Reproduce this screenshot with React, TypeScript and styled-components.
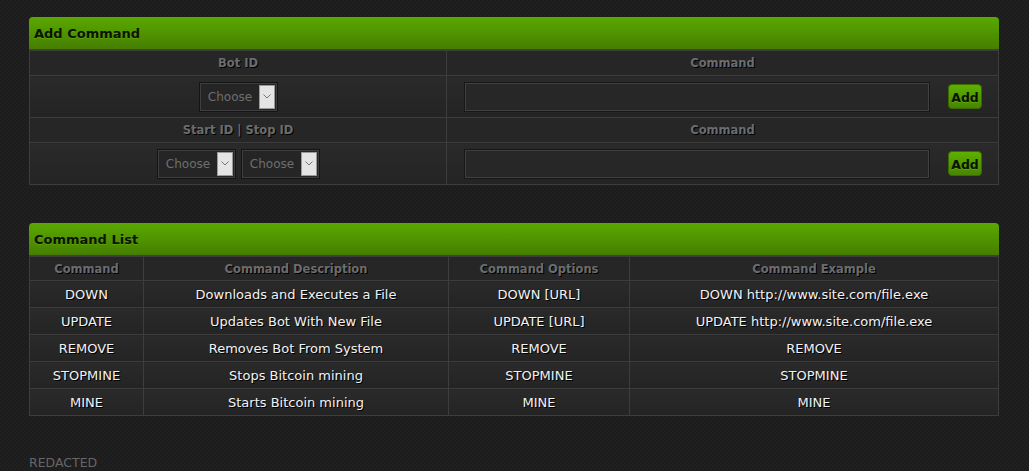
import React from "react";
import styled, { createGlobalStyle } from "styled-components";

const Global = createGlobalStyle`
  html, body {
    margin: 0;
    padding: 0;
    background-color: #1c1c1c;
    background-image:
      linear-gradient(45deg, rgba(255,255,255,0.018) 25%, transparent 25%, transparent 75%, rgba(255,255,255,0.018) 75%),
      linear-gradient(45deg, rgba(255,255,255,0.018) 25%, transparent 25%, transparent 75%, rgba(255,255,255,0.018) 75%);
    background-size: 4px 4px;
    background-position: 0 0, 2px 2px;
    font-family: "DejaVu Sans", Verdana, sans-serif;
    color: #fff;
  }
`;

const Page = styled.div`
  padding: 17px 31px 0 29px;
  width: 970px;
  display: flex;
  flex-direction: column;
`;

const Panel = styled.section<{ $gap?: number }>`
  width: 970px;
  display: flex;
  flex-direction: column;
  margin-bottom: ${(p) => p.$gap ?? 0}px;
`;

const PanelHeader = styled.div`
  height: 33px;
  box-sizing: border-box;
  border-radius: 4px 4px 0 0;
  background: linear-gradient(to bottom, #5aa800 0%, #4f9200 55%, #457e00 100%);
  border-bottom: 1px solid #2f5500;
  display: flex;
  align-items: center;
  padding: 1px 0 0 5px;
  font-size: 13px;
  font-weight: bold;
  color: #0c1400;
  text-shadow: 0 1px 0 rgba(120, 200, 40, 0.35);
`;

const Table = styled.table`
  width: 100%;
  border-collapse: collapse;
  border: 1px solid #3d3d3d;
  table-layout: fixed;
`;

const HeadCell = styled.th<{ $w?: number; $h?: number }>`
  ${(p) => (p.$w ? `width: ${p.$w}px;` : "")}
  height: ${(p) => p.$h ?? 24}px;
  padding: 0;
  background: #262626;
  border: 1px solid #3d3d3d;
  color: #6c6c6c;
  font-size: 11.5px;
  font-weight: bold;
  text-align: center;
  text-shadow: 1px 1px 0 #000;
`;

const Cell = styled.td<{ $h: number }>`
  height: ${(p) => p.$h}px;
  padding: 0;
  background: linear-gradient(to bottom, #2a2a2a, #242424);
  border: 1px solid #3d3d3d;
  text-align: center;
  color: #f2f2f2;
  font-size: 13px;
  text-shadow: 1px 1px 0 #000;
`;

const SelectRow = styled.div`
  display: flex;
  justify-content: center;
  gap: 7px;
`;

const SelectBox = styled.div`
  width: 77px;
  height: 28px;
  box-sizing: border-box;
  border: 1px solid #3e3e3e;
  outline: 1px solid #141414;
  background: #252525;
  display: flex;
  align-items: center;
  padding: 1px;
`;

const SelectLabel = styled.span`
  flex: 1;
  text-align: center;
  color: #6e6e6e;
  font-size: 12px;
  text-shadow: none;
`;

const Arrow = styled.span`
  width: 16px;
  height: 24px;
  background: #e4e4e4;
  border: 1px solid #9a9a9a;
  box-sizing: border-box;
  display: flex;
  align-items: center;
  justify-content: center;
`;

const InputRow = styled.div`
  display: flex;
  align-items: center;
  padding: 0 16px 0 18px;
  gap: 19px;
`;

const TextInput = styled.input`
  flex: 1;
  height: 28px;
  box-sizing: border-box;
  background: #272727;
  border: 1px solid #404040;
  outline: 1px solid #171717;
  color: #ddd;
  font-family: inherit;
  font-size: 12px;
`;

const AddButton = styled.button`
  width: 34px;
  height: 25px;
  padding: 1px 0 0;
  border: 1px solid #3c6a00;
  border-radius: 4px;
  background: linear-gradient(to bottom, #5eb000, #478500);
  color: #0a1200;
  font-family: inherit;
  font-size: 12.5px;
  font-weight: bold;
  text-shadow: 0 1px 0 rgba(130, 210, 40, 0.35);
  cursor: pointer;
`;

const Footer = styled.div`
  margin-top: 39px;
  color: #666;
  font-size: 12.5px;
`;

const Chevron = () => (
  <svg width="8" height="5" viewBox="0 0 8 5">
    <path d="M0.5 0.5 L4 4 L7.5 0.5" fill="none" stroke="#777" strokeWidth="1" />
  </svg>
);

const Select = () => (
  <SelectBox>
    <SelectLabel>Choose</SelectLabel>
    <Arrow>
      <Chevron />
    </Arrow>
  </SelectBox>
);

const commands = [
  ["DOWN", "Downloads and Executes a File", "DOWN [URL]", "DOWN http://www.site.com/file.exe"],
  ["UPDATE", "Updates Bot With New File", "UPDATE [URL]", "UPDATE http://www.site.com/file.exe"],
  ["REMOVE", "Removes Bot From System", "REMOVE", "REMOVE"],
  ["STOPMINE", "Stops Bitcoin mining", "STOPMINE", "STOPMINE"],
  ["MINE", "Starts Bitcoin mining", "MINE", "MINE"],
];

const CommandRow = ({ selects }: { selects: number }) => (
  <tr>
    <Cell $h={41}>
      <SelectRow>
        {Array.from({ length: selects }, (_, i) => (
          <Select key={i} />
        ))}
      </SelectRow>
    </Cell>
    <Cell $h={41}>
      <InputRow>
        <TextInput />
        <AddButton>Add</AddButton>
      </InputRow>
    </Cell>
  </tr>
);

export default function App() {
  return (
    <>
      <Global />
      <Page>
        <Panel $gap={38}>
          <PanelHeader>Add Command</PanelHeader>
          <Table>
            <tbody>
              <tr>
                <HeadCell $w={416}>Bot ID</HeadCell>
                <HeadCell>Command</HeadCell>
              </tr>
              <CommandRow selects={1} />
              <tr>
                <HeadCell>Start ID | Stop ID</HeadCell>
                <HeadCell>Command</HeadCell>
              </tr>
              <CommandRow selects={2} />
            </tbody>
          </Table>
        </Panel>

        <Panel>
          <PanelHeader>Command List</PanelHeader>
          <Table>
            <tbody>
              <tr>
                <HeadCell $w={113} $h={23}>Command</HeadCell>
                <HeadCell $w={304} $h={23}>Command Description</HeadCell>
                <HeadCell $w={180} $h={23}>Command Options</HeadCell>
                <HeadCell $h={23}>Command Example</HeadCell>
              </tr>
              {commands.map((row) => (
                <tr key={row[0]}>
                  {row.map((c, i) => (
                    <Cell key={i} $h={26}>
                      {c}
                    </Cell>
                  ))}
                </tr>
              ))}
            </tbody>
          </Table>
        </Panel>
        <Footer>REDACTED</Footer>
      </Page>
    </>
  );
}
